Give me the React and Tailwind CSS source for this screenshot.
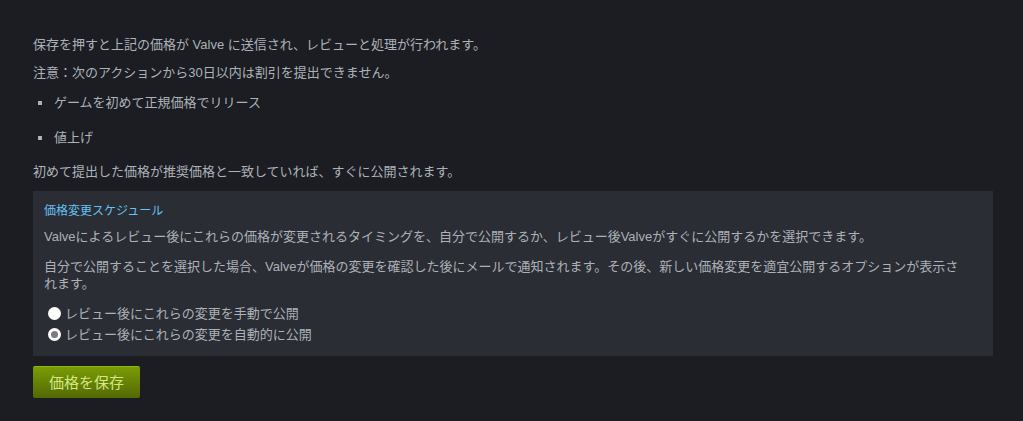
export default function App() {
  const font = { fontFamily: '"Liberation Sans", "Noto Sans CJK JP", sans-serif' };
  return (
    <div className="w-[1023px] h-[421px] bg-[#1b1d22] text-[#acb2b8] text-[13px] leading-[18px] overflow-hidden" style={font}>
      <div className="pl-[33px] pr-[30px] pt-[36px]">
        <p className="mb-[10px]">保存を押すと上記の価格が Valve に送信され、レビューと処理が行われます。</p>
        <p className="mb-[12px]">注意：次のアクションから30日以内は割引を提出できません。</p>
        <ul className="mb-[16px]">
          <li className="flex items-center mb-[17px]">
            <span className="w-[4px] h-[4px] bg-[#acb2b8] ml-[5px] mr-[12px]"></span>
            ゲームを初めて正規価格でリリース
          </li>
          <li className="flex items-center">
            <span className="w-[4px] h-[4px] bg-[#acb2b8] ml-[5px] mr-[12px]"></span>
            値上げ
          </li>
        </ul>
        <p className="mb-[10px]">初めて提出した価格が推奨価格と一致していれば、すぐに公開されます。</p>
        <div className="w-[960px] bg-[#2a2d33] pl-[11px] pr-[30px] pt-[11px] pb-[11px]">
          <div className="text-[12px] text-[#67c1f5] mb-[8px]">価格変更スケジュール</div>
          <p className="mb-[12px]">Valveによるレビュー後にこれらの価格が変更されるタイミングを、自分で公開するか、レビュー後Valveがすぐに公開するかを選択できます。</p>
          <p className="mb-[11px] leading-[17px]">自分で公開することを選択した場合、Valveが価格の変更を確認した後にメールで通知されます。その後、新しい価格変更を適宜公開するオプションが表示されます。</p>
          <div className="flex items-center h-[21px] pl-[4px]">
            <span className="w-[13px] h-[13px] rounded-full bg-white mr-[4px]"></span>
            <span>レビュー後にこれらの変更を手動で公開</span>
          </div>
          <div className="flex items-center h-[21px] pl-[4px]">
            <span className="w-[13px] h-[13px] rounded-full bg-white mr-[4px] flex items-center justify-center">
              <span className="w-[7px] h-[7px] rounded-full bg-[#7a7a7a]"></span>
            </span>
            <span>レビュー後にこれらの変更を自動的に公開</span>
          </div>
        </div>
        <button className="mt-[10px] w-[107px] h-[32px] rounded-[2px] bg-gradient-to-b from-[#7a9c05] to-[#536904] text-[#d2e885] text-[15px] flex items-center justify-center border-t border-[#8fb80a]">
          価格を保存
        </button>
      </div>
    </div>
  );
}
